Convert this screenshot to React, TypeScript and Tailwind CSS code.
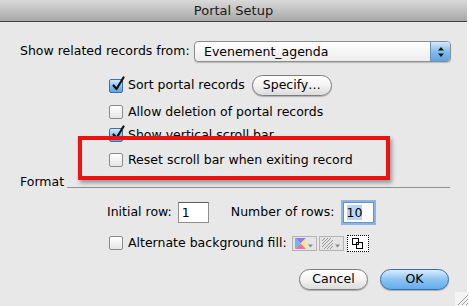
const font = { fontFamily: '"DejaVu Sans", "Lucida Grande", sans-serif' };

function Check({ on }: { on?: boolean }) {
  return (
    <div
      className={
        "relative w-[14px] h-[14px] rounded-[2px] border shrink-0 " +
        (on
          ? "border-[#3d6fa8] bg-gradient-to-b from-[#d4e9fb] via-[#8dc2f0] to-[#5aa3e6]"
          : "border-[#8a8a8a] bg-gradient-to-b from-[#ffffff] to-[#e6e6e6]")
      }
    >
      {on && (
        <svg className="absolute -top-[4px] left-[1px]" width="15" height="16" viewBox="0 0 15 16">
          <path d="M2.5 9.5 L5.5 13 L12.5 1.5" fill="none" stroke="#111" strokeWidth="2.2" strokeLinecap="round" strokeLinejoin="round" />
        </svg>
      )}
    </div>
  );
}

function CheckRow({ on, label, className = "" }: { on?: boolean; label: string; className?: string }) {
  return (
    <div className={"flex items-center h-[20px] pl-[109px] gap-[5px] " + className}>
      <Check on={on} />
      <span className="text-[12.5px] text-black leading-none">{label}</span>
    </div>
  );
}

function PillButton({ label, primary, className = "" }: { label: string; primary?: boolean; className?: string }) {
  return (
    <div
      className={
        "h-[21px] rounded-full border flex items-center justify-center text-[12.5px] text-black shadow-[0_1px_1px_rgba(0,0,0,0.25)] " +
        (primary
          ? "border-[#3a6aa3] bg-gradient-to-b from-[#d9edfd] via-[#8cc3f2] to-[#62acec]"
          : "border-[#7d7d7d] bg-gradient-to-b from-[#ffffff] via-[#f3f3f3] to-[#dcdcdc]") +
        " " +
        className
      }
    >
      {label}
    </div>
  );
}

export default function App() {
  return (
    <div className="relative w-[469px] h-[306px] overflow-hidden bg-white" style={font}>
      <div className="w-[467px] h-[306px] bg-[#e8e8e8] flex flex-col">
        {/* title bar */}
        <div className="h-[22px] shrink-0 bg-gradient-to-b from-[#dadada] to-[#a7a7a7] border-b border-[#3f3f3f] flex items-center justify-center">
          <span className="text-[13px] text-[#1a1a1a]">Portal Setup</span>
        </div>

        {/* related records */}
        <div className="flex items-center mt-[19px] h-[21px]">
          <span className="w-[194px] pl-[20px] text-[12.5px] text-black">Show related records from:</span>
          <div className="w-[257px] h-[21px] flex rounded-[4px] border border-[#8d8d8d] bg-gradient-to-b from-[#ffffff] to-[#ececec] shadow-[0_1px_1px_rgba(0,0,0,0.2)] overflow-hidden">
            <span className="flex-1 pl-[9px] text-[12.5px] leading-[19px] text-black">Evenement_agenda</span>
            <div className="w-[20px] h-full border-l border-[#6d8fb8] bg-gradient-to-b from-[#d3e8fb] via-[#86bdef] to-[#5ba4e7] flex items-center justify-center">
              <svg width="8" height="12" viewBox="0 0 8 12">
                <path d="M4 1 L7 4.5 L1 4.5 Z M4 11 L7 7.5 L1 7.5 Z" fill="#111" />
              </svg>
            </div>
          </div>
        </div>

        {/* sort */}
        <div className="flex items-center mt-[13px] h-[21px] pl-[109px]">
          <Check on />
          <span className="ml-[5px] text-[12.5px] text-black">Sort portal records</span>
          <PillButton label="Specify…" className="ml-[7px] w-[80px]" />
        </div>
        <CheckRow label="Allow deletion of portal records" className="mt-[6px]" />
        <CheckRow on label="Show vertical scroll bar" className="mt-[3px]" />
        <CheckRow label="Reset scroll bar when exiting record" className="mt-[5px]" />

        {/* format group */}
        <div className="flex items-center mt-[4px] h-[16px] pl-[20px] pr-[17px]">
          <span className="text-[12.5px] text-black">Format</span>
          <div className="flex-1 h-px bg-[#8f8f8f] ml-[3px] mt-[10px]" />
        </div>

        <div className="flex items-center mt-[12px] h-[21px] pl-[107px]">
          <span className="text-[12.5px] text-black">Initial row:</span>
          <div className="ml-[6px] w-[31px] h-[21px] bg-white border border-[#8e8e8e] border-t-[#5e5e5e] text-[12.5px] leading-[19px] pl-[3px]">1</div>
          <span className="ml-[22px] text-[12.5px] text-black">Number of rows:</span>
          <div className="ml-[8px] w-[31px] h-[21px] bg-white border border-[#6d8fc0] shadow-[0_0_0_2px_#8ab4ea] text-[12.5px] leading-[19px] pl-[3px]">
            <span className="bg-[#b6d5fc]">10</span>
          </div>
        </div>

        <div className="flex items-center mt-[10px] h-[20px] pl-[109px]">
          <Check />
          <span className="ml-[5px] text-[12.5px] text-black">Alternate background fill:</span>
          <div className="ml-[5px] w-[25px] h-[15px] border border-[#b3b3b3] bg-[#e4e4e4] flex items-center pl-[2px] gap-[1px]">
            <svg width="11" height="11" viewBox="0 0 11 11">
              <path d="M0 0 L11 0 L5.5 5.5 Z" fill="#8f7bea" />
              <path d="M11 0 L11 11 L5.5 5.5 Z" fill="#f3ec6c" />
              <path d="M11 11 L0 11 L5.5 5.5 Z" fill="#f06ea8" />
              <path d="M0 11 L0 0 L5.5 5.5 Z" fill="#66b8f0" />
            </svg>
            <svg width="7" height="6" viewBox="0 0 7 6" className="mt-[5px]">
              <path d="M1 1.5 L6 1.5 L3.5 4.5 Z" fill="#888" />
            </svg>
          </div>
          <div className="ml-[2px] w-[25px] h-[15px] border border-[#b3b3b3] bg-[#e4e4e4] flex items-center pl-[2px] gap-[1px]">
            <svg width="11" height="11" viewBox="0 0 11 11">
              <path d="M0 3 L3 0 M0 6 L6 0 M0 9 L9 0 M2 11 L11 2 M5 11 L11 5 M8 11 L11 8" stroke="#9a9a9a" strokeWidth="1" />
            </svg>
            <svg width="7" height="6" viewBox="0 0 7 6" className="mt-[5px]">
              <path d="M1 1.5 L6 1.5 L3.5 4.5 Z" fill="#888" />
            </svg>
          </div>
          <div className="ml-[3px] w-[22px] h-[17px] border border-dotted border-black bg-white flex items-center justify-center">
            <svg width="11" height="11" viewBox="0 0 11 11">
              <rect x="0.5" y="0.5" width="6" height="6" fill="none" stroke="#000" />
              <rect x="4.5" y="4.5" width="6" height="6" fill="none" stroke="#000" />
            </svg>
          </div>
        </div>

        <div className="flex justify-end mt-[16px] pr-[18px] gap-[12px]">
          <PillButton label="Cancel" className="w-[69px]" />
          <PillButton label="OK" primary className="w-[69px]" />
        </div>
      </div>

      {/* resize grip */}
      <svg className="absolute right-0 bottom-0" width="14" height="14" viewBox="0 0 14 14">
        <rect width="14" height="14" fill="#f4f4f4" />
        <path d="M3 13 L13 3 M7 13 L13 7 M11 13 L13 11" stroke="#9a9a9a" strokeWidth="1" />
      </svg>

      {/* red highlight annotation */}
      <div className="absolute left-[78px] top-[136px] w-[312px] h-[44px] border-[4px] border-[#ee1111] shadow-[2px_3px_4px_rgba(0,0,0,0.35)]" />
    </div>
  );
}
